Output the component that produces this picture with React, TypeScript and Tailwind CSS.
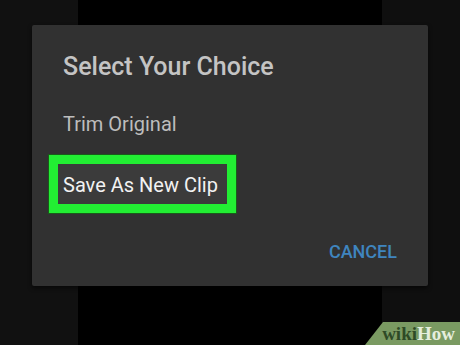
export default function App() {
  return (
    <div className="relative w-[460px] h-[345px] overflow-hidden bg-[#101010] font-['Roboto',sans-serif]">
      <div className="flex h-full">
        <div className="w-[78px] bg-[#111111]" />
        <div className="w-[304px] bg-black" />
        <div className="flex-1 bg-[#0f0f0f]" />
      </div>

      <div className="absolute left-[32px] top-[25px] w-[396px] h-[261px] rounded-[2px] bg-[#313131] pl-[17px] pr-[31px] pt-[27px] shadow-[0_2px_4px_rgba(0,0,0,0.6)]">
        <div className="ml-[14px] text-[25px] leading-[30px] font-medium text-[#c4c4c4]">Select Your Choice</div>
        <div className="ml-[14px] mt-[30px] text-[20px] leading-[24px] text-[#bdbdbd]">Trim Original</div>
        <div className="mt-[19px] w-[187px] h-[58px] border-[9px] border-[#22ee33] bg-[#3b3b3b] pl-[5px] pt-[9px] outline outline-1 outline-[#1a5a1a]">
          <div className="text-[20px] leading-[24px] text-[#f2f2f2] whitespace-nowrap">Save As New Clip</div>
        </div>
        <div className="mt-[29px] flex justify-end">
          <span className="text-[18px] leading-[20px] font-medium text-[#3f85bf]">CANCEL</span>
        </div>
      </div>

      <div className="absolute right-0 bottom-0 w-[95px] h-[23px] bg-[#7a9a62] [clip-path:polygon(18px_0,100%_0,100%_100%,0_100%)] flex items-center justify-end pr-[5px]">
        <span className="font-['Liberation_Serif',serif] font-bold text-[19px] leading-none">
          <span className="text-[#2e4a26]">wiki</span>
          <span className="text-[#e6eedd]">How</span>
        </span>
      </div>
    </div>
  )
}
